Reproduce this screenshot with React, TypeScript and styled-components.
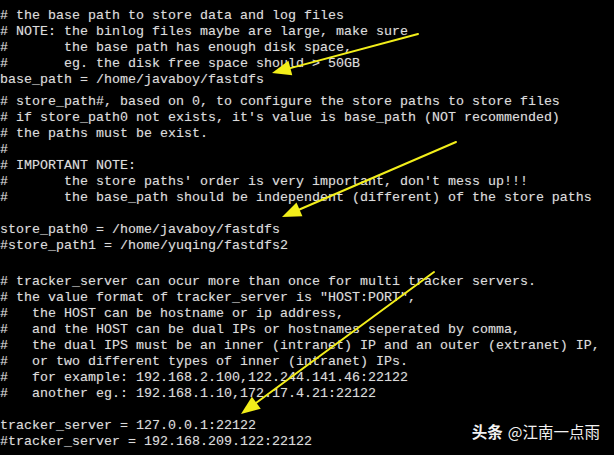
import React from "react";
import styled, { createGlobalStyle } from "styled-components";

const GlobalStyle = createGlobalStyle`
  html, body {
    margin: 0;
    padding: 0;
    background: #000;
  }
  #root {
    width: 614px;
    height: 455px;
  }
`;

const Screen = styled.div`
  position: relative;
  width: 614px;
  height: 455px;
  overflow: hidden;
  background: #000;
  padding-top: 8px;
  box-sizing: border-box;
`;

const Section = styled.div<{ $gap: number }>`
  margin-top: ${(p) => p.$gap}px;
  display: flex;
  flex-direction: column;
`;

const Line = styled.div`
  font-family: "Liberation Mono", "Courier New", monospace;
  font-size: 13.333px;
  line-height: 16px;
  height: 16px;
  color: #dcdcdc;
  white-space: pre;
  text-shadow: 0 0 1px rgba(220, 220, 220, 0.35);
`;

const ArrowLayer = styled.svg`
  position: absolute;
  left: 0;
  top: 0;
  width: 614px;
  height: 455px;
  pointer-events: none;
`;

const Watermark = styled.div`
  position: absolute;
  right: 14px;
  bottom: 15px;
  display: flex;
  align-items: baseline;
  gap: 5px;
  font-family: "Noto Sans CJK SC", "Noto Sans", sans-serif;
  font-size: 15.5px;
  line-height: 18px;
  color: #f2f2f2;
  text-shadow: 0 0 2px rgba(0, 0, 0, 0.8);
`;

const WmBrand = styled.span`
  font-weight: 700;
`;

const WmUser = styled.span`
  font-weight: 400;
`;

const sections: { gap: number; lines: string[] }[] = [
  {
    gap: 0,
    lines: [
      "# the base path to store data and log files",
      "# NOTE: the binlog files maybe are large, make sure",
      "#       the base path has enough disk space,",
      "#       eg. the disk free space should > 50GB",
      "base_path = /home/javaboy/fastdfs",
    ],
  },
  {
    gap: 6,
    lines: [
      "# store_path#, based on 0, to configure the store paths to store files",
      "# if store_path0 not exists, it's value is base_path (NOT recommended)",
      "# the paths must be exist.",
      "#",
      "# IMPORTANT NOTE:",
      "#       the store paths' order is very important, don't mess up!!!",
      "#       the base_path should be independent (different) of the store paths",
      "",
      "store_path0 = /home/javaboy/fastdfs",
      "#store_path1 = /home/yuqing/fastdfs2",
    ],
  },
  {
    gap: 20,
    lines: [
      "# tracker_server can ocur more than once for multi tracker servers.",
      '# the value format of tracker_server is "HOST:PORT",',
      "#   the HOST can be hostname or ip address,",
      "#   and the HOST can be dual IPs or hostnames seperated by comma,",
      "#   the dual IPS must be an inner (intranet) IP and an outer (extranet) IP,",
      "#   or two different types of inner (intranet) IPs.",
      "#   for example: 192.168.2.100,122.244.141.46:22122",
      "#   another eg.: 192.168.1.10,172.17.4.21:22122",
      "",
      "tracker_server = 127.0.0.1:22122",
      "#tracker_server = 192.168.209.122:22122",
    ],
  },
];

type ArrowSpec = { x1: number; y1: number; x2: number; y2: number };

const arrows: ArrowSpec[] = [
  { x1: 418, y1: 34, x2: 272, y2: 73 },
  { x1: 456, y1: 142, x2: 282, y2: 217 },
  { x1: 434, y1: 272, x2: 241, y2: 414 },
];

const Arrow: React.FC<ArrowSpec> = ({ x1, y1, x2, y2 }) => {
  const dx = x2 - x1;
  const dy = y2 - y1;
  const len = Math.hypot(dx, dy);
  const ux = dx / len;
  const uy = dy / len;
  const headLen = 19;
  const halfW = 7.5;
  const bx = x2 - ux * headLen;
  const by = y2 - uy * headLen;
  const px = -uy;
  const py = ux;
  const pts = `${x2},${y2} ${bx + px * halfW},${by + py * halfW} ${bx - px * halfW},${by - py * halfW}`;
  return (
    <g>
      <line x1={x1} y1={y1} x2={bx} y2={by} stroke="#f2ee1a" strokeWidth={2} strokeLinecap="round" />
      <polygon points={pts} fill="#f2ee1a" />
    </g>
  );
};

export default function App() {
  return (
    <>
      <GlobalStyle />
      <Screen>
        {sections.map((s, i) => (
          <Section key={i} $gap={s.gap}>
            {s.lines.map((l, j) => (
              <Line key={j}>{l}</Line>
            ))}
          </Section>
        ))}
        <ArrowLayer viewBox="0 0 614 455">
          {arrows.map((a, i) => (
            <Arrow key={i} {...a} />
          ))}
        </ArrowLayer>
        <Watermark>
          <WmBrand>头条</WmBrand>
          <WmUser>@江南一点雨</WmUser>
        </Watermark>
      </Screen>
    </>
  );
}
